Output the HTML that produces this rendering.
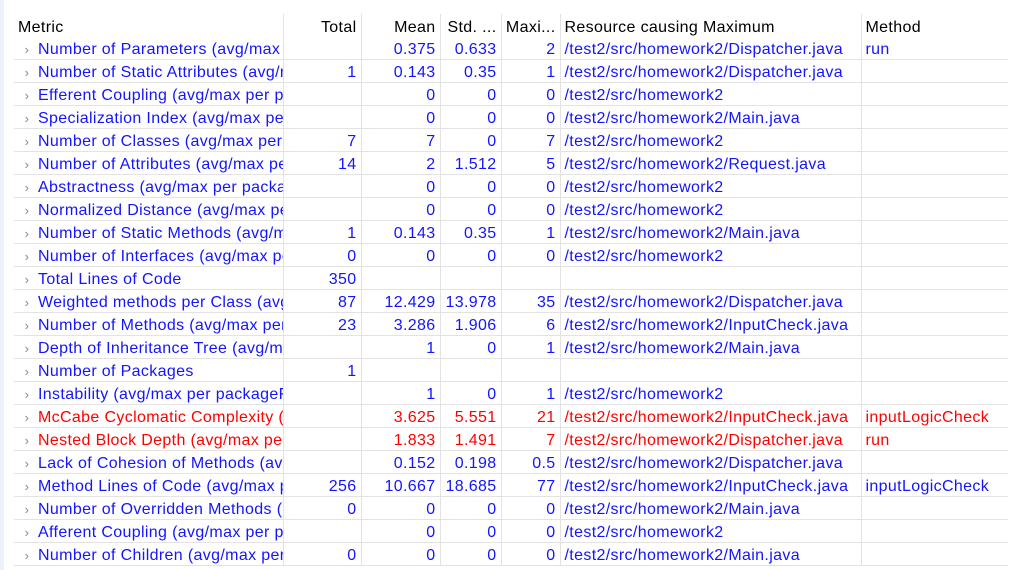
<!DOCTYPE html><html><head><style>
body{margin:0;width:1012px;height:570px;overflow:hidden;background:#fff;font-family:"Liberation Sans","Noto Sans CJK SC",sans-serif;font-size:16px;letter-spacing:0.35px}
.edge{position:absolute;left:0;top:0;width:4px;height:570px;background:#eef0f8}
table{position:absolute;left:14px;top:14px;border-collapse:collapse;table-layout:fixed;width:994px}
td,th{height:19px;padding:3px 4px 0;white-space:nowrap;overflow:hidden;border-left:1px solid #e3e3e3;border-bottom:1px solid #e3e3e3;color:#1414ff;line-height:19px}
th{font-weight:normal;color:#000;height:20px;border-bottom:none;text-align:left}
td:first-child,th:first-child{border-left:none;text-overflow:clip}
.r{text-align:right}
tr.red td{color:#f00}
.ch{color:#888;font-size:13px;display:inline-block;width:22px;text-align:center;margin-left:-2px}
</style></head><body><div class="edge"></div>
<table>
<colgroup><col style="width:269px"><col style="width:78px"><col style="width:79px"><col style="width:61px"><col style="width:59px"><col style="width:301px"><col style="width:147px"></colgroup>
<tr><th>Metric</th><th class="r">Total</th><th class="r">Mean</th><th class="r">Std. ...</th><th class="r">Maxi...</th><th>Resource causing Maximum</th><th>Method</th></tr>
<tr><td><span class="ch">›</span>Number of Parameters (avg/max per</td><td class="r"></td><td class="r">0.375</td><td class="r">0.633</td><td class="r">2</td><td>/test2/src/homework2/Dispatcher.java</td><td>run</td></tr>
<tr><td><span class="ch">›</span>Number of Static Attributes (avg/max</td><td class="r">1</td><td class="r">0.143</td><td class="r">0.35</td><td class="r">1</td><td>/test2/src/homework2/Dispatcher.java</td><td></td></tr>
<tr><td><span class="ch">›</span>Efferent Coupling (avg/max per pack</td><td class="r"></td><td class="r">0</td><td class="r">0</td><td class="r">0</td><td>/test2/src/homework2</td><td></td></tr>
<tr><td><span class="ch">›</span>Specialization Index (avg/max per ty</td><td class="r"></td><td class="r">0</td><td class="r">0</td><td class="r">0</td><td>/test2/src/homework2/Main.java</td><td></td></tr>
<tr><td><span class="ch">›</span>Number of Classes (avg/max per pack</td><td class="r">7</td><td class="r">7</td><td class="r">0</td><td class="r">7</td><td>/test2/src/homework2</td><td></td></tr>
<tr><td><span class="ch">›</span>Number of Attributes (avg/max per ty</td><td class="r">14</td><td class="r">2</td><td class="r">1.512</td><td class="r">5</td><td>/test2/src/homework2/Request.java</td><td></td></tr>
<tr><td><span class="ch">›</span>Abstractness (avg/max per packageFr</td><td class="r"></td><td class="r">0</td><td class="r">0</td><td class="r">0</td><td>/test2/src/homework2</td><td></td></tr>
<tr><td><span class="ch">›</span>Normalized Distance (avg/max per pa</td><td class="r"></td><td class="r">0</td><td class="r">0</td><td class="r">0</td><td>/test2/src/homework2</td><td></td></tr>
<tr><td><span class="ch">›</span>Number of Static Methods (avg/max p</td><td class="r">1</td><td class="r">0.143</td><td class="r">0.35</td><td class="r">1</td><td>/test2/src/homework2/Main.java</td><td></td></tr>
<tr><td><span class="ch">›</span>Number of Interfaces (avg/max per pa</td><td class="r">0</td><td class="r">0</td><td class="r">0</td><td class="r">0</td><td>/test2/src/homework2</td><td></td></tr>
<tr><td><span class="ch">›</span>Total Lines of Code</td><td class="r">350</td><td class="r"></td><td class="r"></td><td class="r"></td><td></td><td></td></tr>
<tr><td><span class="ch">›</span>Weighted methods per Class (avg/max</td><td class="r">87</td><td class="r">12.429</td><td class="r">13.978</td><td class="r">35</td><td>/test2/src/homework2/Dispatcher.java</td><td></td></tr>
<tr><td><span class="ch">›</span>Number of Methods (avg/max per type</td><td class="r">23</td><td class="r">3.286</td><td class="r">1.906</td><td class="r">6</td><td>/test2/src/homework2/InputCheck.java</td><td></td></tr>
<tr><td><span class="ch">›</span>Depth of Inheritance Tree (avg/max p</td><td class="r"></td><td class="r">1</td><td class="r">0</td><td class="r">1</td><td>/test2/src/homework2/Main.java</td><td></td></tr>
<tr><td><span class="ch">›</span>Number of Packages</td><td class="r">1</td><td class="r"></td><td class="r"></td><td class="r"></td><td></td><td></td></tr>
<tr><td><span class="ch">›</span>Instability (avg/max per packageFrag</td><td class="r"></td><td class="r">1</td><td class="r">0</td><td class="r">1</td><td>/test2/src/homework2</td><td></td></tr>
<tr class="red"><td><span class="ch">›</span>McCabe Cyclomatic Complexity (avg/</td><td class="r"></td><td class="r">3.625</td><td class="r">5.551</td><td class="r">21</td><td>/test2/src/homework2/InputCheck.java</td><td>inputLogicCheck</td></tr>
<tr class="red"><td><span class="ch">›</span>Nested Block Depth (avg/max per met</td><td class="r"></td><td class="r">1.833</td><td class="r">1.491</td><td class="r">7</td><td>/test2/src/homework2/Dispatcher.java</td><td>run</td></tr>
<tr><td><span class="ch">›</span>Lack of Cohesion of Methods (avg/ma</td><td class="r"></td><td class="r">0.152</td><td class="r">0.198</td><td class="r">0.5</td><td>/test2/src/homework2/Dispatcher.java</td><td></td></tr>
<tr><td><span class="ch">›</span>Method Lines of Code (avg/max per m</td><td class="r">256</td><td class="r">10.667</td><td class="r">18.685</td><td class="r">77</td><td>/test2/src/homework2/InputCheck.java</td><td>inputLogicCheck</td></tr>
<tr><td><span class="ch">›</span>Number of Overridden Methods (avg/</td><td class="r">0</td><td class="r">0</td><td class="r">0</td><td class="r">0</td><td>/test2/src/homework2/Main.java</td><td></td></tr>
<tr><td><span class="ch">›</span>Afferent Coupling (avg/max per pack</td><td class="r"></td><td class="r">0</td><td class="r">0</td><td class="r">0</td><td>/test2/src/homework2</td><td></td></tr>
<tr><td><span class="ch">›</span>Number of Children (avg/max per typ</td><td class="r">0</td><td class="r">0</td><td class="r">0</td><td class="r">0</td><td>/test2/src/homework2/Main.java</td><td></td></tr>
</table></body></html>
